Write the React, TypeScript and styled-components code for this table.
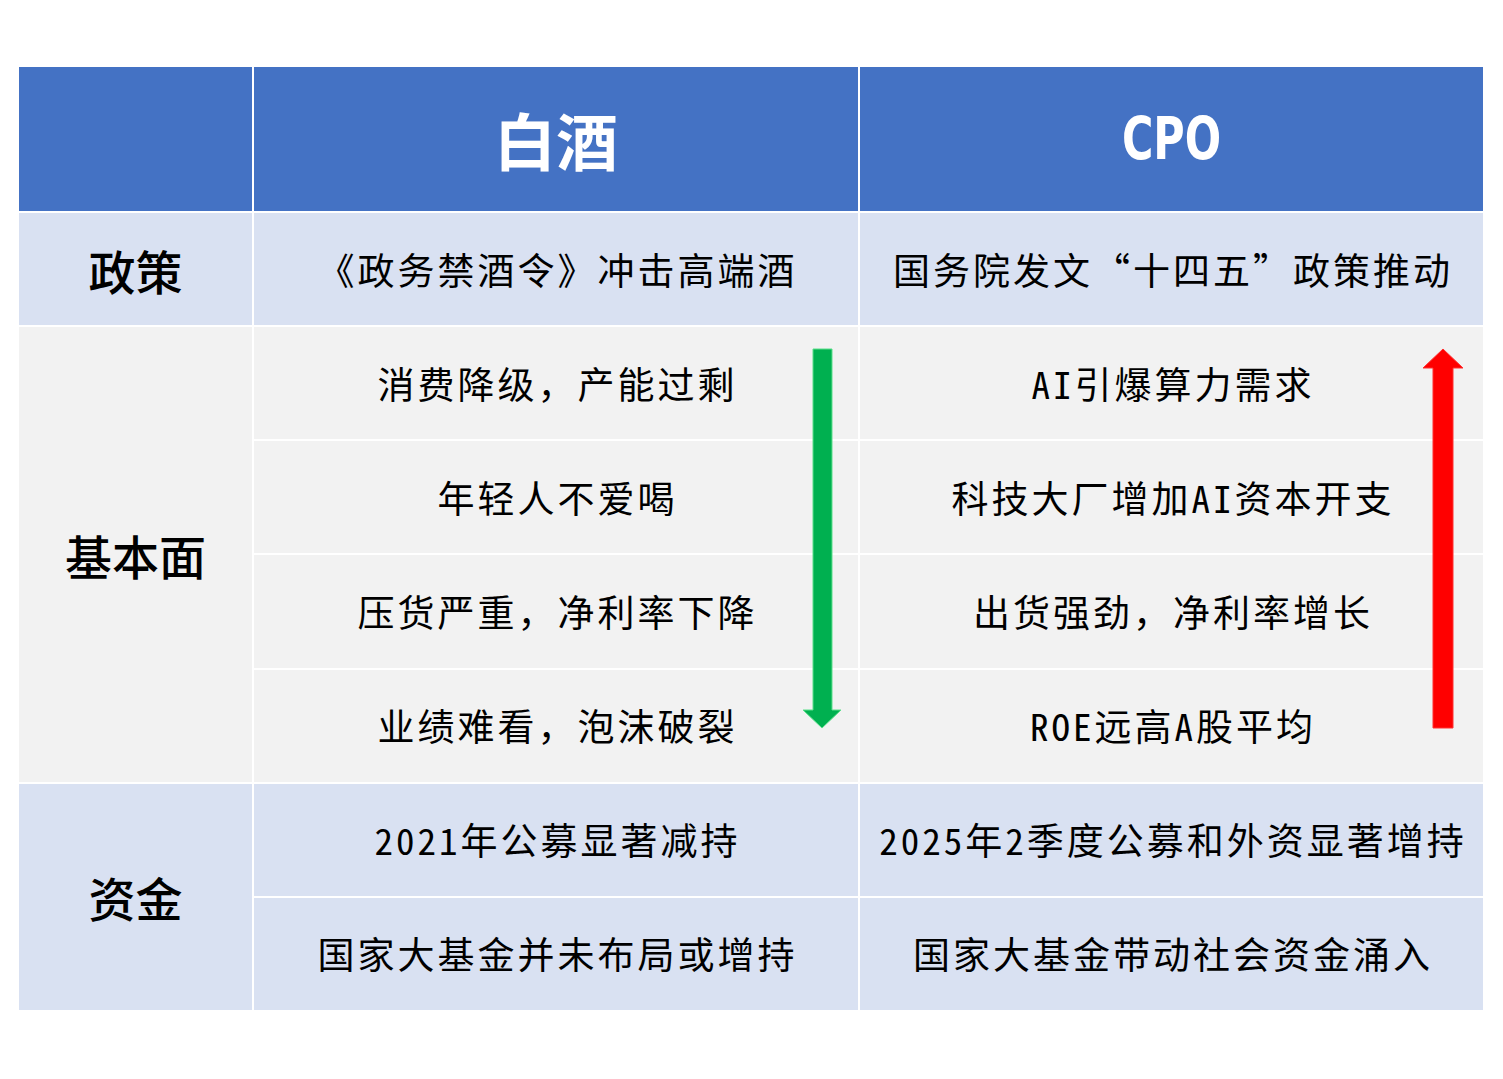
import React from "react";
import styled, { createGlobalStyle } from "styled-components";

const Global = createGlobalStyle`
  html, body { margin: 0; padding: 0; background: #ffffff; }
  body { font-family: "Noto Sans Mono CJK SC", "Noto Sans CJK SC", sans-serif; }
`;

const Page = styled.div`
  padding: 67px 0 0 19px;
  width: 1503px;
  height: 1079px;
  box-sizing: border-box;
`;

const Board = styled.div`
  position: relative;
  width: 1464px;
`;

const Grid = styled.div`
  display: grid;
  grid-template-columns: 233px 604px 623px;
  grid-template-rows: 144px repeat(7, 1fr);
  height: 943px;
  gap: 2px;
  background: #ffffff;
`;

type Tone = "head" | "blue" | "grey";

const bg: Record<Tone, string> = {
  head: "#4472C4",
  blue: "#D9E1F2",
  grey: "#F2F2F2",
};

const Cell = styled.div<{ $tone: Tone; $span?: number }>`
  display: flex;
  align-items: center;
  justify-content: center;
  background: ${(p) => bg[p.$tone]};
  grid-row: ${(p) => (p.$span ? `span ${p.$span}` : "auto")};
  white-space: nowrap;
`;

const HeadText = styled.span`
  color: #ffffff;
  font-family: "Noto Sans CJK SC", sans-serif;
  font-weight: 700;
  font-size: 62px;
  line-height: 1;
`;

const LatinHead = styled(HeadText)`
  font-family: "DejaVu Sans Condensed", "Liberation Sans Narrow", "Noto Sans CJK SC", sans-serif;
  font-size: 58px;
  transform: scaleX(0.82);
`;

const LabelText = styled.span`
  color: #000000;
  font-family: "Noto Sans CJK SC", sans-serif;
  font-weight: 500;
  font-size: 47px;
  line-height: 1;
`;

const BodyText = styled.span`
  color: #000000;
  font-family: "Noto Sans Mono CJK SC", "Noto Sans CJK SC", sans-serif;
  font-weight: 500;
  font-size: 37px;
  line-height: 1;
  letter-spacing: 3px;
  margin-right: -3px;
`;

const ArrowLayer = styled.svg`
  position: absolute;
  left: 0;
  top: 0;
  pointer-events: none;
`;

export default function App() {
  const rows: { label?: string; span?: number; tone: Tone; a: string; b: string }[] = [
    { label: "政策", span: 1, tone: "blue", a: "《政务禁酒令》冲击高端酒", b: "国务院发文“十四五”政策推动" },
    { label: "基本面", span: 4, tone: "grey", a: "消费降级，产能过剩", b: "AI引爆算力需求" },
    { tone: "grey", a: "年轻人不爱喝", b: "科技大厂增加AI资本开支" },
    { tone: "grey", a: "压货严重，净利率下降", b: "出货强劲，净利率增长" },
    { tone: "grey", a: "业绩难看，泡沫破裂", b: "ROE远高A股平均" },
    { label: "资金", span: 2, tone: "blue", a: "2021年公募显著减持", b: "2025年2季度公募和外资显著增持" },
    { tone: "blue", a: "国家大基金并未布局或增持", b: "国家大基金带动社会资金涌入" },
  ];

  return (
    <>
      <Global />
      <Page>
        <Board>
          <Grid>
            <Cell $tone="head" />
            <Cell $tone="head">
              <HeadText>白酒</HeadText>
            </Cell>
            <Cell $tone="head">
              <LatinHead>CPO</LatinHead>
            </Cell>
            {rows.map((r, i) => (
              <React.Fragment key={i}>
                {r.label && (
                  <Cell $tone={r.tone} $span={r.span}>
                    <LabelText>{r.label}</LabelText>
                  </Cell>
                )}
                <Cell $tone={r.tone}>
                  <BodyText>{r.a}</BodyText>
                </Cell>
                <Cell $tone={r.tone}>
                  <BodyText>{r.b}</BodyText>
                </Cell>
              </React.Fragment>
            ))}
          </Grid>
          <ArrowLayer width="1464" height="943" viewBox="0 0 1464 943">
            <polygon
              points="794,282 813,282 813,643 822,643 803,661 784,643 794,643"
              fill="#00B050"
              stroke="#5BE08A"
              strokeWidth="1"
            />
            <polygon
              points="1414,661 1434,661 1434,301 1444,301 1424,282 1404,301 1414,301"
              fill="#FF0000"
              stroke="#FF3030"
              strokeWidth="1"
            />
          </ArrowLayer>
        </Board>
      </Page>
    </>
  );
}
